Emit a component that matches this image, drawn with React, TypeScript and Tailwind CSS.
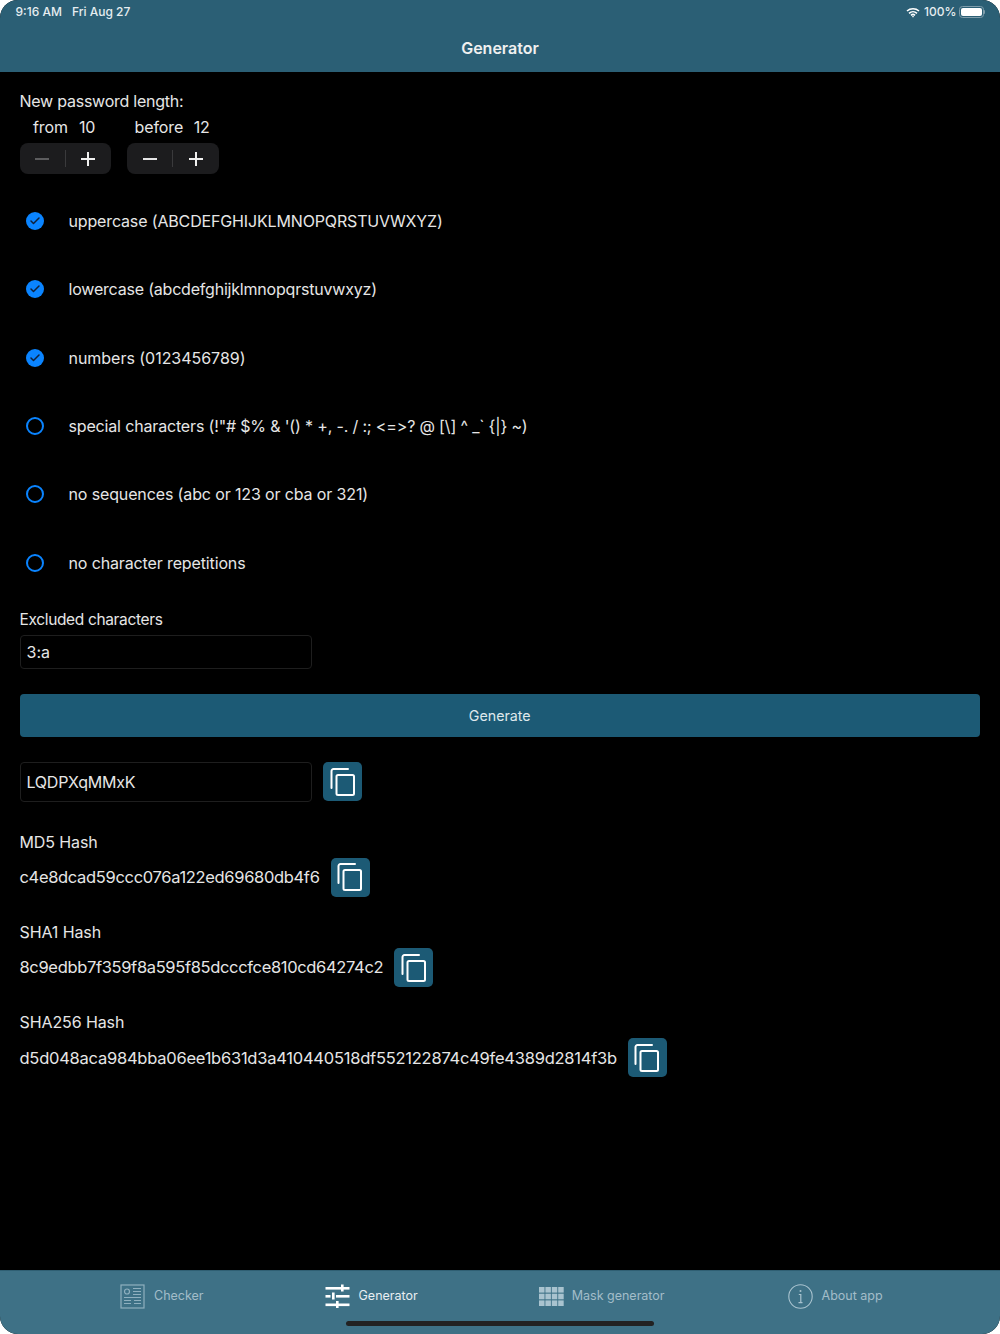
import type { ReactNode } from "react";
import { Check } from "lucide-react";

const FONT = "font-['Inter','Liberation_Sans',sans-serif]";

const OPTIONS = [
  { label: "uppercase (ABCDEFGHIJKLMNOPQRSTUVWXYZ)", checked: true, tracking: "tracking-[-0.15px]" },
  { label: "lowercase (abcdefghijklmnopqrstuvwxyz)", checked: true, tracking: "tracking-[-0.2px]" },
  { label: "numbers (0123456789)", checked: true, tracking: "tracking-[-0.03px]" },
  { label: "special characters (!\"# $% & '() * +, -. / :; <=>? @ [\\] ^ _` {|} ~)", checked: false, tracking: "tracking-[-0.16px]" },
  { label: "no sequences (abc or 123 or cba or 321)", checked: false, tracking: "tracking-[-0.13px]" },
  { label: "no character repetitions", checked: false, tracking: "tracking-[-0.13px]" },
];

const HASHES = [
  { name: "MD5 Hash", value: "c4e8dcad59ccc076a122ed69680db4f6", tracking: "tracking-[-0.33px]" },
  { name: "SHA1 Hash", value: "8c9edbb7f359f8a595f85dcccfce810cd64274c2", tracking: "tracking-[-0.34px]" },
  { name: "SHA256 Hash", value: "d5d048aca984bba06ee1b631d3a410440518df552122874c49fe4389d2814f3b", tracking: "tracking-[-0.24px]" },
];

function CopyButton() {
  return (
    <button className="flex h-[39px] w-[39px] shrink-0 items-center justify-center rounded-[5px] bg-[#1c5a75]">
      <svg width="28" height="30" viewBox="0 0 28 30" fill="none" stroke="#fff" strokeWidth="2">
        <path d="M2.5 21V4a2 2 0 0 1 2-2H19" strokeLinecap="round" />
        <rect x="7.5" y="8" width="17.5" height="20" rx="1.5" />
      </svg>
    </button>
  );
}

function Stepper({ dimMinus }: { dimMinus?: boolean }) {
  return (
    <div className="flex h-[31px] w-[91.5px] items-center rounded-[8px] bg-[#1c1c1e]">
      <div className="flex flex-1 justify-center">
        <div className={`h-[2px] w-[14px] ${dimMinus ? "bg-[#5c5c5e]" : "bg-[#e5e5e5]"}`} />
      </div>
      <div className="h-[17px] w-px bg-[#3a3a3c]" />
      <div className="relative flex flex-1 items-center justify-center">
        <div className="h-[2px] w-[14px] bg-[#f0f0f0]" />
        <div className="absolute h-[14px] w-[2px] bg-[#f0f0f0]" />
      </div>
    </div>
  );
}

function OptionRow({ label, checked, tracking }: { label: string; checked: boolean; tracking: string }) {
  return (
    <div className="flex h-[68.3px] items-center">
      <div className="flex w-[49px] justify-start pl-[6.5px]">
        {checked ? (
          <div className="flex h-[18px] w-[18px] items-center justify-center rounded-full bg-[#0a84ff]">
            <Check size={12} strokeWidth={3} color="#10203a" />
          </div>
        ) : (
          <div className="h-[18px] w-[18px] rounded-full border-2 border-[#0a84ff]" />
        )}
      </div>
      <span className={`text-[16px] text-[#e6e6e6] ${tracking}`}>{label}</span>
    </div>
  );
}

function CheckerIcon() {
  return (
    <svg width="25" height="25" viewBox="0 0 25 25" fill="none" stroke="#8fb0bf" strokeWidth="1.2">
      <rect x="1" y="1" width="23" height="23" />
      <circle cx="7" cy="7.5" r="2.5" />
      <path d="M13 4.5h8M13 7.5h8M13 10.5h8M4 13.5h17M4 16.5h7M14 16.5h7M4 19.5h7M14 19.5h7" />
    </svg>
  );
}

function GeneratorIcon() {
  return (
    <svg width="25" height="25" viewBox="0 0 25 25" fill="#fff">
      <rect x="0.5" y="3" width="24" height="2.6" />
      <rect x="16" y="0.5" width="2.6" height="7" />
      <rect x="0.5" y="11" width="5" height="2.6" />
      <rect x="11" y="11" width="13.5" height="2.6" />
      <rect x="7" y="8.5" width="2.6" height="7" />
      <rect x="0.5" y="19.5" width="24" height="2.6" />
      <rect x="11" y="17" width="2.6" height="7" />
    </svg>
  );
}

function MaskIcon() {
  return (
    <svg width="25" height="19" viewBox="0 0 25 19" fill="#a9c3cf">
      {[0, 6.7, 13.4].map((y) =>
        [0, 6.4, 12.8, 19.2].map((x) => <rect key={`${x}-${y}`} x={x} y={y} width="5.5" height="5.6" />)
      )}
    </svg>
  );
}

function InfoIcon() {
  return (
    <svg width="25" height="25" viewBox="0 0 25 25" fill="none" stroke="#a9c3cf">
      <circle cx="12.5" cy="12.5" r="11.7" strokeWidth="1.1" />
      <circle cx="12.5" cy="7" r="1" fill="#a9c3cf" stroke="none" />
      <path d="M10.8 10.5h2v8M10.5 18.7h4" strokeWidth="1.2" />
    </svg>
  );
}

function Tab({ icon, label, active, className }: { icon: ReactNode; label: string; active?: boolean; className: string }) {
  return (
    <div className={`flex h-[25px] items-center ${className}`}>
      {icon}
      <span className={`text-[12.5px] ${active ? "text-[#e8eef1]" : "text-[#a3bdc9]"}`}>{label}</span>
    </div>
  );
}

export default function App() {
  return (
    <div className={`${FONT} relative flex h-[1334px] w-[1000px] flex-col overflow-hidden rounded-[18px] bg-black`}>
      {/* Status + nav bar */}
      <header className="h-[72px] shrink-0 bg-[#2b5f75] text-white">
        <div className="flex h-[24px] items-center justify-between pl-[15.5px] pr-[15px] text-[12px] font-medium text-[#e6edf0]">
          <div className="flex gap-[10px]">
            <span>9:16 AM</span>
            <span>Fri Aug 27</span>
          </div>
          <div className="flex items-center">
            <svg className="mr-[4px]" width="14" height="11" viewBox="0 0 14 11" fill="none" stroke="#fff" strokeWidth="1.6">
              <path d="M1 4a9 9 0 0 1 12 0M3 6.3a6 6 0 0 1 8 0M5 8.3a3 3 0 0 1 4 0" />
              <circle cx="7" cy="9.6" r="0.8" fill="#fff" stroke="none" />
            </svg>
            <span className="mr-[2px]">100%</span>
            <div className="flex items-center">
              <div className="h-[12px] w-[25px] rounded-[3.5px] border border-[#7f9dab] p-px">
                <div className="h-full w-full rounded-[2px] bg-white" />
              </div>
              <div className="h-[4px] w-[1.5px] rounded-r bg-[#7f9dab]" />
            </div>
          </div>
        </div>
        <h1 className="mt-[12px] text-center text-[16px] font-semibold leading-[25px] text-[#f0f0f0]">Generator</h1>
      </header>

      {/* Form */}
      <main className="flex-1 pl-[19.5px] pr-[20px] pt-[17px] text-[#e6e6e6]">
        <p className="text-[16px] leading-[25px] tracking-[-0.24px]">New password length:</p>
        <div className="mt-px flex gap-[16px] text-[16px] leading-[25px] tracking-[-0.1px]">
          <div className="w-[91.5px]">
            <div className="flex gap-[11px] pl-[13.5px]">
              <span>from</span>
              <span>10</span>
            </div>
            <div className="mt-[3px]">
              <Stepper dimMinus />
            </div>
          </div>
          <div className="w-[91.5px]">
            <div className="flex gap-[10.5px] whitespace-nowrap pl-[7.5px]">
              <span>before</span>
              <span>12</span>
            </div>
            <div className="mt-[3px]">
              <Stepper />
            </div>
          </div>
        </div>

        <div className="mt-[13px]">
          {OPTIONS.map((o) => (
            <OptionRow key={o.label} label={o.label} checked={o.checked} tracking={o.tracking} />
          ))}
        </div>

        <p className="mt-[12px] text-[15.5px] leading-[22px] tracking-[-0.35px]">Excluded characters</p>
        <div className="mt-[4px] flex h-[34px] w-[292.5px] items-center rounded-[4px] border border-[#1e1e1e] px-[6px] text-[16px]">3:a</div>

        <button className="mt-[25px] h-[43px] w-full rounded-[4px] bg-[#1c5a75] text-[14.25px] text-[#dfe8ec]">Generate</button>

        <div className="mt-[25px] flex items-center gap-[11px]">
          <div className="flex h-[40px] w-[292.5px] items-center rounded-[4px] border border-[#1e1e1e] px-[6px] text-[16px] tracking-[-0.25px]">LQDPXqMMxK</div>
          <CopyButton />
        </div>

        {HASHES.map((h, i) => (
          <div key={h.name} className={i === 0 ? "mt-[29px]" : "mt-[24.3px]"}>
            <p className="text-[16px] leading-[22px] tracking-[-0.1px]">{h.name}</p>
            <div className="mt-[5px] flex items-center gap-[11px]">
              <span className={`text-[16.5px] ${h.tracking}`}>{h.value}</span>
              <CopyButton />
            </div>
          </div>
        ))}
      </main>

      {/* Tab bar */}
      <nav className="relative flex h-[64px] shrink-0 items-start gap-[121px] border-t border-[#2f5f73] bg-[#3e7186] pl-[120px] pt-[13px]">
        <Tab icon={<CheckerIcon />} label="Checker" className="gap-[9px]" />
        <Tab icon={<GeneratorIcon />} label="Generator" active className="gap-[9px]" />
        <Tab icon={<MaskIcon />} label="Mask generator" className="gap-[8px]" />
        <Tab icon={<InfoIcon />} label="About app" className="ml-[2px] gap-[9px]" />
        <div className="absolute left-[346px] top-[50px] h-[5px] w-[308px] rounded-full bg-[#222]" />
      </nav>
    </div>
  );
}
